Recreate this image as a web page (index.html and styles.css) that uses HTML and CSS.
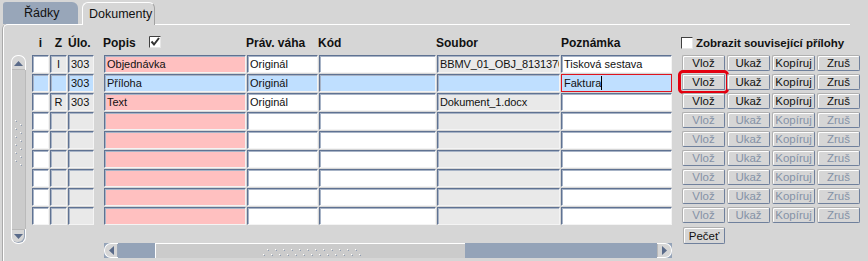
FILE: index.html
```html
<!DOCTYPE html>
<html lang="cs">
<head>
    <meta charset="UTF-8">
    <title>Dokumenty</title>
    <link rel="stylesheet" href="styles.css">
</head>
<body>
    <div class="tabs">
        <div class="tab tab-off">Řádky</div>
        <div class="tab tab-on">Dokumenty</div>
    </div>

    <div class="panel">
        <!-- vertical scrollbar -->
        <div class="vscroll">
            <div class="vs-up">
                <svg width="9" height="5" viewBox="0 0 9 5"><polygon points="0,5 4.5,0 9,5" fill="#5a6b8a"/></svg>
            </div>
            <div class="vs-track">
                <svg class="grip" width="8" height="46" viewBox="0 0 8 46">
                    <defs>
                        <pattern id="vdots" width="8" height="8" patternUnits="userSpaceOnUse">
                            <rect x="0" y="0" width="1" height="1" fill="#fff"/>
                            <rect x="1" y="1" width="1" height="1" fill="#8f9db3"/>
                            <rect x="5" y="4" width="1" height="1" fill="#fff"/>
                            <rect x="6" y="5" width="1" height="1" fill="#8f9db3"/>
                        </pattern>
                    </defs>
                    <rect width="8" height="46" fill="url(#vdots)"/>
                </svg>
            </div>
            <div class="vs-down">
                <svg width="9" height="5" viewBox="0 0 9 5"><polygon points="0,0 9,0 4.5,5" fill="#5a6b8a"/></svg>
            </div>
        </div>

        <div class="table">
            <div class="head">
                <div class="c-i center">i</div>
                <div class="c-z center">Z</div>
                <div class="c-ulo">Úlo.</div>
                <div class="c-popis popis-head">
                    <span>Popis</span>
                    <svg width="12" height="12" viewBox="0 0 12 12">
                        <rect x="0.5" y="0.5" width="11" height="11" fill="#fff" stroke="#e6e6e6"/>
                        <path d="M0.5 11.5 V0.5 H11.5" fill="none" stroke="#404040"/>
                        <path d="M2.5 5.5 L5 8.5 L10 2" fill="none" stroke="#333" stroke-width="2"/>
                    </svg>
                </div>
                <div class="c-prav">Práv. váha</div>
                <div class="c-kod">Kód</div>
                <div class="c-soubor">Soubor</div>
                <div class="c-pozn">Poznámka</div>
            </div>

            <div class="row">
                <div class="f w c-i"></div>
                <div class="f g c-z center">I</div>
                <div class="f g c-ulo">303</div>
                <div class="f p c-popis">Objednávka</div>
                <div class="f w c-prav">Originál</div>
                <div class="f w c-kod"></div>
                <div class="f g c-soubor">BBMV_01_OBJ_8131370</div>
                <div class="f w c-pozn">Tisková sestava</div>
            </div>
            <div class="row">
                <div class="f s c-i"></div>
                <div class="f s c-z center"></div>
                <div class="f s c-ulo">303</div>
                <div class="f s c-popis">Příloha</div>
                <div class="f s c-prav">Originál</div>
                <div class="f s c-kod"></div>
                <div class="f s c-soubor"></div>
                <div class="f s c-pozn edit">Faktura<span class="caret"></span></div>
            </div>
            <div class="row">
                <div class="f w c-i"></div>
                <div class="f g c-z center">R</div>
                <div class="f g c-ulo">303</div>
                <div class="f p c-popis">Text</div>
                <div class="f w c-prav">Originál</div>
                <div class="f w c-kod"></div>
                <div class="f g c-soubor">Dokument_1.docx</div>
                <div class="f w c-pozn"></div>
            </div>
            <div class="row">
                <div class="f w c-i"></div><div class="f g c-z"></div><div class="f g c-ulo"></div><div class="f p c-popis"></div>
                <div class="f w c-prav"></div><div class="f w c-kod"></div><div class="f g c-soubor"></div><div class="f w c-pozn"></div>
            </div>
            <div class="row">
                <div class="f w c-i"></div><div class="f g c-z"></div><div class="f g c-ulo"></div><div class="f p c-popis"></div>
                <div class="f w c-prav"></div><div class="f w c-kod"></div><div class="f g c-soubor"></div><div class="f w c-pozn"></div>
            </div>
            <div class="row">
                <div class="f w c-i"></div><div class="f g c-z"></div><div class="f g c-ulo"></div><div class="f p c-popis"></div>
                <div class="f w c-prav"></div><div class="f w c-kod"></div><div class="f g c-soubor"></div><div class="f w c-pozn"></div>
            </div>
            <div class="row">
                <div class="f w c-i"></div><div class="f g c-z"></div><div class="f g c-ulo"></div><div class="f p c-popis"></div>
                <div class="f w c-prav"></div><div class="f w c-kod"></div><div class="f g c-soubor"></div><div class="f w c-pozn"></div>
            </div>
            <div class="row">
                <div class="f w c-i"></div><div class="f g c-z"></div><div class="f g c-ulo"></div><div class="f p c-popis"></div>
                <div class="f w c-prav"></div><div class="f w c-kod"></div><div class="f g c-soubor"></div><div class="f w c-pozn"></div>
            </div>
            <div class="row">
                <div class="f w c-i"></div><div class="f g c-z"></div><div class="f g c-ulo"></div><div class="f p c-popis"></div>
                <div class="f w c-prav"></div><div class="f w c-kod"></div><div class="f g c-soubor"></div><div class="f w c-pozn"></div>
            </div>

            <!-- horizontal scrollbar -->
            <div class="hscroll">
                <div class="hs-left">
                    <svg width="5" height="9" viewBox="0 0 5 9"><polygon points="5,0 5,9 0,4.5" fill="#5a6b8a"/></svg>
                </div>
                <div class="hs-thumb">
                    <svg width="98" height="8" viewBox="0 0 98 8">
                        <defs>
                            <pattern id="hdots" width="8" height="8" patternUnits="userSpaceOnUse">
                                <rect x="4" y="0" width="1" height="1" fill="#fff"/>
                                <rect x="5" y="1" width="1" height="1" fill="#8f9db3"/>
                                <rect x="0" y="5" width="1" height="1" fill="#fff"/>
                                <rect x="1" y="6" width="1" height="1" fill="#8f9db3"/>
                            </pattern>
                        </defs>
                        <rect width="98" height="8" fill="url(#hdots)"/>
                    </svg>
                </div>
                <div class="hs-right">
                    <svg width="5" height="9" viewBox="0 0 5 9"><polygon points="0,0 5,4.5 0,9" fill="#5a6b8a"/></svg>
                </div>
            </div>
        </div>

        <div class="side">
            <div class="side-head">
                <span class="box"></span>
                <span>Zobrazit související přílohy</span>
            </div>
            <div class="btn-row">
                <button class="btn">Vlož</button><button class="btn">Ukaž</button><button class="btn">Kopíruj</button><button class="btn">Zruš</button>
            </div>
            <div class="btn-row">
                <button class="btn focus">Vlož</button><button class="btn">Ukaž</button><button class="btn">Kopíruj</button><button class="btn">Zruš</button>
            </div>
            <div class="btn-row">
                <button class="btn">Vlož</button><button class="btn">Ukaž</button><button class="btn">Kopíruj</button><button class="btn">Zruš</button>
            </div>
            <div class="btn-row">
                <button class="btn" disabled>Vlož</button><button class="btn" disabled>Ukaž</button><button class="btn" disabled>Kopíruj</button><button class="btn" disabled>Zruš</button>
            </div>
            <div class="btn-row">
                <button class="btn" disabled>Vlož</button><button class="btn" disabled>Ukaž</button><button class="btn" disabled>Kopíruj</button><button class="btn" disabled>Zruš</button>
            </div>
            <div class="btn-row">
                <button class="btn" disabled>Vlož</button><button class="btn" disabled>Ukaž</button><button class="btn" disabled>Kopíruj</button><button class="btn" disabled>Zruš</button>
            </div>
            <div class="btn-row">
                <button class="btn" disabled>Vlož</button><button class="btn" disabled>Ukaž</button><button class="btn" disabled>Kopíruj</button><button class="btn" disabled>Zruš</button>
            </div>
            <div class="btn-row">
                <button class="btn" disabled>Vlož</button><button class="btn" disabled>Ukaž</button><button class="btn" disabled>Kopíruj</button><button class="btn" disabled>Zruš</button>
            </div>
            <div class="btn-row">
                <button class="btn" disabled>Vlož</button><button class="btn" disabled>Ukaž</button><button class="btn" disabled>Kopíruj</button><button class="btn" disabled>Zruš</button>
            </div>
            <button class="btn pecet">Pečeť</button>
        </div>
    </div>
</body>
</html>
```

FILE: styles.css
```css
/* Form look, grey desktop style */
* {
    box-sizing: border-box;
}

body {
    margin: 0;
    width: 868px;
    height: 261px;
    overflow: hidden;
    background: #d6d6d6;
    color: #111;
    font-family: "Liberation Sans", Arial, sans-serif;
}

/* tabs */
.tabs {
    display: flex;
    align-items: flex-end;
    gap: 4px;
    height: 24px;
    padding: 2px 0 0 3px;
}

.tab {
    font-size: 12.5px;
    line-height: 20px;
    padding-top: 1px;
}

.tab-off {
    width: 75px;
    height: 22px;
    padding-left: 21px;
    background: #98a6b9;
    border-radius: 3px 6px 0 0;
}

.tab-on {
    position: relative;
    z-index: 1;
    width: 73px;
    height: 23px;
    margin-bottom: -1px;
    padding-left: 6px;
    background: #d6d6d6;
    border: 1px solid #fff;
    border-bottom: none;
    border-right-color: #a2a2a2;
    border-radius: 6px 6px 0 0;
}

/* panel */
.panel {
    display: flex;
    width: 847px;
    height: 237px;
    margin-left: 3px;
    padding: 10px 0 0 7px;
    border-left: 1px solid #fff;
    border-top: 1px solid #fff;
    border-top-left-radius: 5px;
    box-shadow: -1px 0 0 #a9a9a9;
}

/* vertical scrollbar */
.vscroll {
    display: flex;
    flex-direction: column;
    flex-shrink: 0;
    width: 15px;
    height: 189px;
    margin-top: 20px;
}

.vs-up,
.vs-down {
    display: flex;
    align-items: center;
    justify-content: center;
    height: 15px;
    border: 1px solid #fff;
    background: #d6d6d6;
}

.vs-up {
    border-bottom: none;
    border-radius: 7px 7px 0 0;
    box-shadow: inset 0 -1px 0 #b9b9b9;
}

.vs-down {
    border-top: none;
    border-radius: 0 0 7px 7px;
    box-shadow: inset 0 1px 0 #b9b9b9, inset -1px -1px 0 #9aa6b8;
}

.vs-track {
    flex: 1;
    display: flex;
    align-items: center;
    justify-content: center;
    background: #cbcbcb;
    border-left: 1px solid #fff;
    border-right: 1px solid #bababa;
}

.grip {
    margin-bottom: 14px;
}

/* table */
.table {
    flex-shrink: 0;
    width: 640px;
    margin-left: 6px;
}

.head {
    display: flex;
    gap: 1px;
    height: 20px;
    font-size: 12px;
    font-weight: bold;
    line-height: 16px;
}

.popis-head {
    display: flex;
    align-items: flex-start;
    gap: 13px;
    margin-left: -1px;
}

.popis-head svg {
    margin-top: 1px;
}

.row {
    display: flex;
    gap: 1px;
    margin-bottom: 1px;
}

.c-i { width: 17px; }
.c-z { width: 17px; }
.c-ulo { width: 26px; margin-right: 9px; }
.c-popis { width: 142px; }
.c-prav { width: 71px; }
.c-kod { width: 117px; }
.c-soubor { width: 123px; }
.c-pozn { width: 111px; }

.head .c-pozn {
    padding-left: 1px;
}

.center {
    text-align: center;
}

.f {
    height: 18px;
    padding-left: 2px;
    border: 1px solid;
    border-color: #5f7292 #f4f4f4 #f4f4f4 #5f7292;
    box-shadow: inset 1px 1px 0 #a7b3c6;
    font-size: 11px;
    line-height: 16px;
    white-space: nowrap;
    overflow: hidden;
}

.f.center {
    padding-left: 0;
}

.w { background: #fff; }
.g { background: #e9e9e9; }
.p { background: #ffc0c0; }
.s { background: #bfdfff; }

.c-soubor.g {
    letter-spacing: -0.1px;
}

.edit {
    border-color: #e0141e;
    box-shadow: none;
}

.caret {
    display: inline-block;
    width: 1px;
    height: 14px;
    background: #000;
    vertical-align: -3px;
}

/* horizontal scrollbar */
.hscroll {
    display: flex;
    width: 568px;
    height: 15px;
    margin: 18px 0 0 72px;
    background: #94a3b8;
}

.hs-left,
.hs-right {
    display: flex;
    align-items: center;
    justify-content: center;
    width: 15px;
    background: #d6d6d6;
    border: 1px solid #fff;
}

.hs-left {
    width: 14px;
    border-right: none;
    border-radius: 7px 0 0 7px;
    box-shadow: inset -1px 0 0 #9aa6b8;
}

.hs-right {
    margin-left: auto;
    border-left: none;
    border-radius: 0 7px 7px 0;
    box-shadow: inset 1px 0 0 #b9b9b9;
}

.hs-thumb {
    display: flex;
    align-items: center;
    justify-content: center;
    width: 310px;
    margin-left: 37px;
    padding: 3px 0 0 2px;
    background: #cbcbcb;
    border-top: 1px solid #fff;
    border-left: 1px solid #fff;
}

/* buttons column */
.side {
    flex-shrink: 0;
    margin-left: 10px;
}

.side-head {
    display: flex;
    align-items: flex-start;
    gap: 3px;
    height: 20px;
    margin-left: -1px;
    font-size: 11.5px;
    font-weight: bold;
    line-height: 17px;
}

.box {
    width: 12px;
    height: 12px;
    margin-top: 2px;
    background: #fff;
    border-top: 1px solid #404040;
    border-left: 1px solid #404040;
    border-right: 1px solid #e6e6e6;
    border-bottom: 1px solid #e6e6e6;
}

.btn-row {
    display: flex;
    gap: 2px;
    margin-bottom: 3px;
}

.btn {
    width: 43px;
    height: 16px;
    padding: 0;
    background: #d6d6d6;
    border: 1px solid;
    border-color: #b0b0b0 #6f809c #6f809c #b0b0b0;
    border-radius: 2px;
    box-shadow: inset 1px 1px 0 #fff;
    color: #111;
    font-family: "Liberation Sans", Arial, sans-serif;
    font-size: 11.5px;
    line-height: 14px;
}

.btn:disabled {
    color: #8592a6;
}

.btn.focus {
    outline: 3px solid #e3000f;
    outline-offset: 1px;
    border-radius: 1px;
}

.pecet {
    display: block;
    width: 42px;
    height: 17px;
    margin: 4px 0 0 1px;
}
```
